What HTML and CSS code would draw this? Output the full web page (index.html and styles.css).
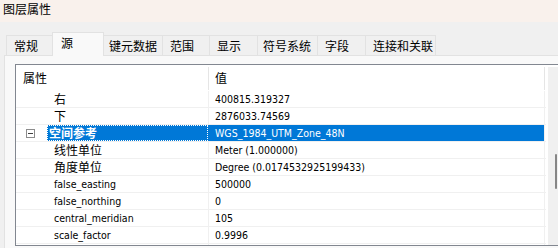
FILE: index.html
```html
<!DOCTYPE html>
<html lang="zh-CN">
<head>
  <meta charset="UTF-8">
  <title>图层属性</title>
  <link rel="stylesheet" href="styles.css">
</head>
<body>
  <div class="titlebar">图层属性</div>

  <div class="tabs">
    <div class="tab w46">常规</div>
    <div class="tab w51 active">源</div>
    <div class="tab w59 tight">键元数据</div>
    <div class="tab w47">范围</div>
    <div class="tab w48">显示</div>
    <div class="tab w60 tight">符号系统</div>
    <div class="tab w48">字段</div>
    <div class="tab w70">连接和关联</div>
  </div>

  <div class="panel">
    <div class="grid">
      <div class="table">
        <div class="row head">
          <div class="name">属性</div>
          <div class="value">值</div>
        </div>
        <div class="row"><div class="name cn">右</div><div class="value">400815.319327</div></div>
        <div class="row"><div class="name cn">下</div><div class="value">2876033.74569</div></div>
        <div class="row selected">
          <div class="name"><span class="toggle"></span><span class="label cn">空间参考</span></div>
          <div class="value">WGS_1984_UTM_Zone_48N</div>
        </div>
        <div class="row"><div class="name cn">线性单位</div><div class="value">Meter (1.000000)</div></div>
        <div class="row"><div class="name cn">角度单位</div><div class="value">Degree (0.0174532925199433)</div></div>
        <div class="row"><div class="name">false_easting</div><div class="value">500000</div></div>
        <div class="row"><div class="name">false_northing</div><div class="value">0</div></div>
        <div class="row"><div class="name">central_meridian</div><div class="value">105</div></div>
        <div class="row"><div class="name">scale_factor</div><div class="value">0.9996</div></div>
        <div class="row"><div class="name"></div><div class="value"></div></div>
      </div>
      <div class="scroll"><div class="thumb"></div></div>
    </div>
  </div>
</body>
</html>
```

FILE: styles.css
```css
body { margin: 0; width: 558px; height: 248px; overflow: hidden; background: #f0f0f0; color: #000;
  font-family: "Noto Sans CJK SC", sans-serif; font-size: 12px; }

.titlebar { height: 22px; line-height: 18px; padding-left: 3px; background: #f9f1ec; }

.tabs { display: flex; align-items: flex-end; height: 33px; padding-left: 6px; }
.tab { height: 20px; line-height: 20px; padding-left: 7px; box-sizing: border-box; background: #f0f0f0;
  border: 1px solid #e2e2e2; border-bottom: none; margin-right: -1px; }
.tab.tight { padding-left: 5px; }
.tab.active { height: 24px; line-height: 19px; padding-left: 8px; background: #f9f9f9; margin-bottom: -1px;
  position: relative; z-index: 1; }
.w46 { width: 47px; } .w51 { width: 52px; } .w59 { width: 60px; } .w47 { width: 48px; }
.w48 { width: 49px; } .w60 { width: 61px; } .w70 { width: 71px; }

.panel { height: 184px; margin-left: 4px; padding: 8px 0 0 10px; background: #f9f9f9; border-top: 1px solid #e2e2e2;
  border-left: 1px solid #e2e2e2; }

.grid { display: flex; width: 560px; height: 180px; background: #fff; border: 1px solid #828790; overflow: hidden; }
.table { width: 530px; overflow: hidden; }
.scroll { width: 14px; margin: 2px 0 0 2px; background: #f0f0f0; position: relative; }
.thumb { position: absolute; left: 7px; top: 87px; width: 2px; height: 35px; background: #868686; border-radius: 1px; }

.row { display: flex; flex: none; height: 16px; line-height: 16px; border-bottom: 1px solid #f0f0f0; font-size: 10.5px; }
.row .name { width: 192px; padding-left: 38px; box-sizing: border-box; white-space: nowrap; display: flex; align-items: center; }
.row .value { width: 337px; padding-left: 6px; box-sizing: border-box; border-left: 1px solid #f0f0f0;
  border-right: 1px solid #f0f0f0; white-space: nowrap; }
.row .name, .row .value { font-family: "DejaVu Sans Condensed", "DejaVu Sans", "Noto Sans CJK SC", sans-serif;
  font-stretch: condensed; }
.row .cn { font-family: "Noto Sans CJK SC", sans-serif; font-size: 12px; }

.row.head { height: 26px; line-height: 26px; border-bottom: none; font-size: 12px; }
.row.head .name { padding-left: 7px; font-family: "Noto Sans CJK SC", sans-serif; }
.row.head .value { border-left-color: #e5e5e5; border-right-color: #e5e5e5; margin-top: 2px; line-height: 22px;
  height: 23px; font-family: "Noto Sans CJK SC", sans-serif; }

.row.selected .name { padding-left: 10px; }
.toggle { width: 7px; height: 7px; border: 1px solid #8c8c8c; position: relative; margin-right: 12px; flex: none; }
.toggle::after { content: ""; position: absolute; left: 1px; right: 1px; top: 3px; height: 1px; background: #404040; }
.label { flex: 1; height: 16px; line-height: 16px; padding-left: 2px; background: #0078d7; color: #fff; font-weight: bold;
  outline: 1px dotted #fff; outline-offset: -1px; }
.row.selected .value { background: #0078d7; color: #fff; border-left-color: #0078d7; }
```
